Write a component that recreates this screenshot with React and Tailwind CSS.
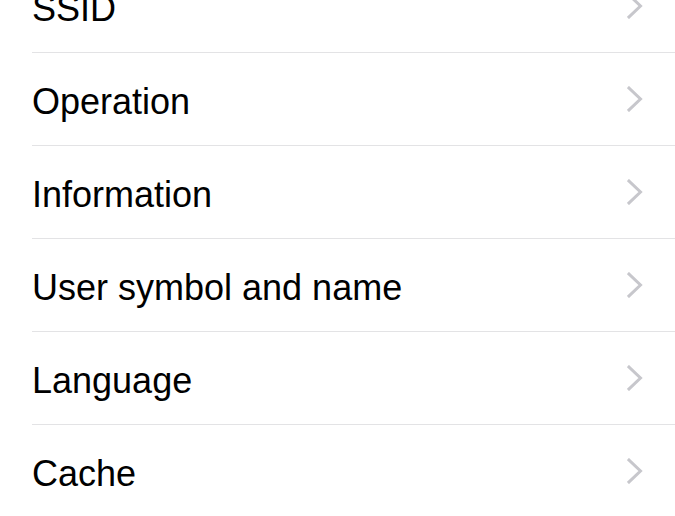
import React from "react";

const items = ["SSID", "Operation", "Information", "User symbol and name", "Language", "Cache"];

function Chevron() {
  return (
    <svg width="16" height="26" viewBox="0 0 16 26" fill="none">
      <path d="M2 2 L13.5 13 L2 24" stroke="#c7c7cc" strokeWidth="3" strokeLinecap="square" strokeLinejoin="miter" />
    </svg>
  );
}

export default function App() {
  return (
    <div className="w-[675px] h-[516px] overflow-hidden bg-white" style={{ fontFamily: '"Liberation Sans", Arial, sans-serif' }}>
      <div className="-mt-[40px] flex flex-col">
        {items.map((t) => (
          <div key={t} className="ml-[32px] h-[93px] border-b border-[#e3e3e5] flex items-center justify-between pr-[32px] shrink-0">
            <span className="text-[36px] leading-[36px] text-black pt-[6px]">{t}</span>
            <Chevron />
          </div>
        ))}
      </div>
    </div>
  );
}
